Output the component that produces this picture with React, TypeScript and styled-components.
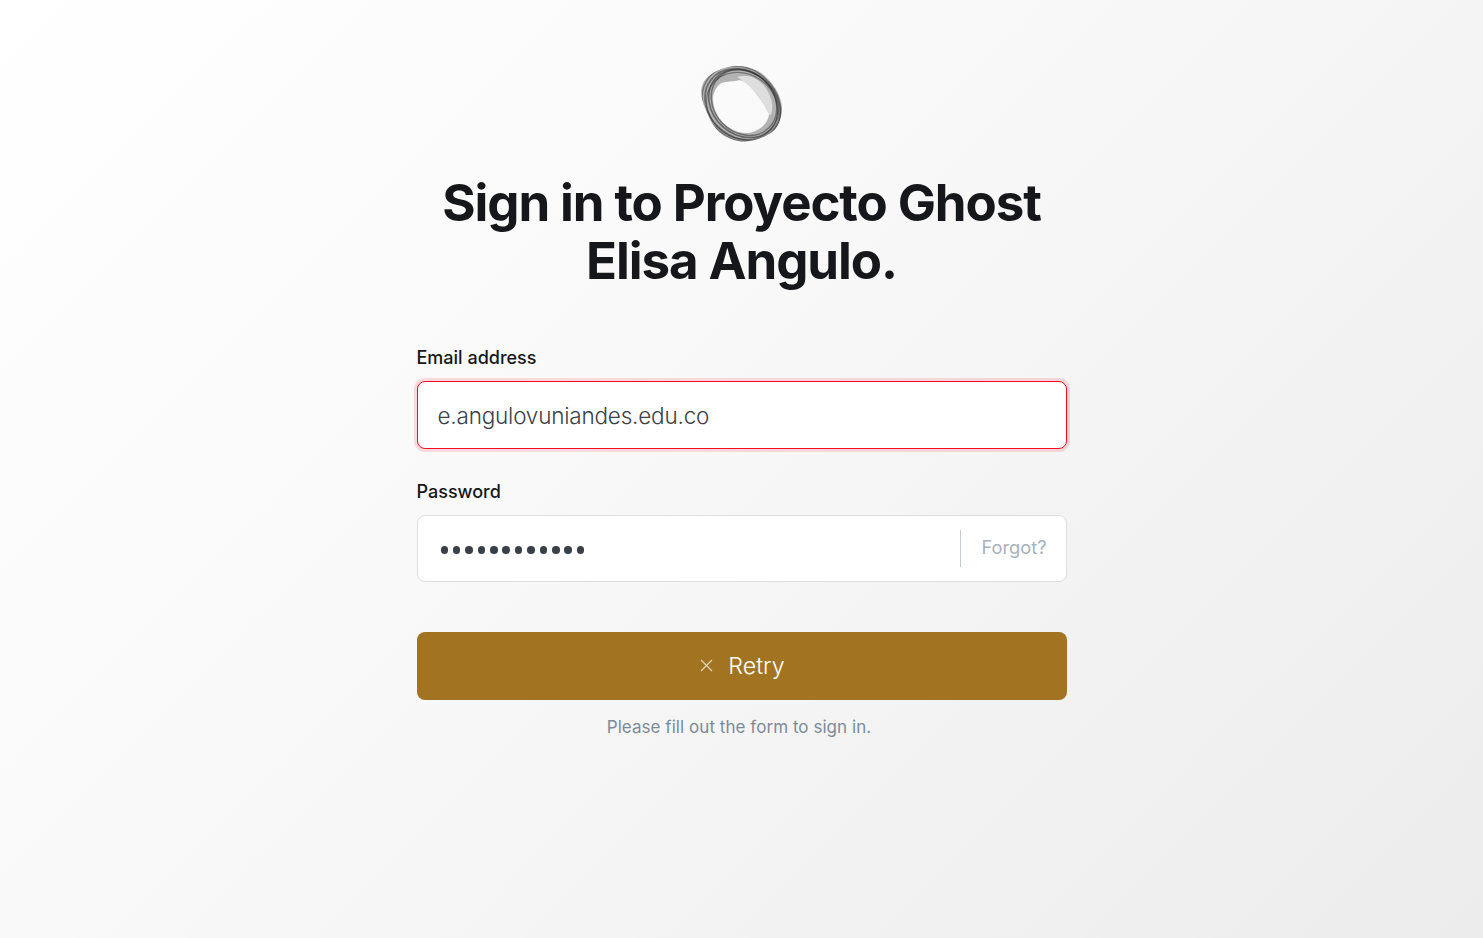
import React from 'react';
import styled, { createGlobalStyle } from 'styled-components';

const GlobalStyle = createGlobalStyle`
  html, body {
    margin: 0;
    padding: 0;
    height: 100%;
  }
  body {
    font-family: Inter, "Liberation Sans", sans-serif;
    overflow: hidden;
  }
`;

const Page = styled.div`
  height: 938px;
  background: linear-gradient(135deg, #ffffff 0%, #f9f9f9 40%, #ececec 100%);
  display: flex;
  flex-direction: column;
  align-items: center;
  padding-top: 65px;
  box-sizing: border-box;
`;

const Logo = styled.svg`
  width: 84px;
  height: 80px;
  display: block;
`;

const Title = styled.h1`
  margin: 29px 0 0;
  width: 650px;
  text-align: center;
  font-size: 51px;
  line-height: 58px;
  font-weight: 700;
  letter-spacing: -1.08px;
  color: #15171a;
`;

const Form = styled.form`
  width: 650px;
  margin-top: 56px;
  display: flex;
  flex-direction: column;
`;

const Field = styled.div`
  display: flex;
  flex-direction: column;
  margin-bottom: 31px;

  &:last-of-type {
    margin-bottom: 24px;
  }
`;

const Label = styled.label`
  font-size: 18px;
  line-height: 24px;
  font-weight: 500;
  color: #15171a;
  margin-bottom: 11px;
`;

const InputBox = styled.div<{ $error?: boolean }>`
  height: ${p => (p.$error ? 68 : 67)}px;
  box-sizing: border-box;
  background: #fff;
  border-radius: 8px;
  border: 1px solid ${p => (p.$error ? '#f50b23' : '#dddee0')};
  box-shadow: ${p => (p.$error ? '0 0 0 3px rgba(240, 37, 55, 0.15)' : 'none')};
  display: flex;
  align-items: center;
  padding-left: 20px;
`;

const InputText = styled.span`
  flex: 1;
  font-size: 22.5px;
  font-weight: 300;
  letter-spacing: -0.2px;
  color: #394047;
`;

const Dots = styled.span`
  flex: 1;
  display: flex;
  gap: 4.9px;
  padding: 3px 0 0 3px;
`;

const Dot = styled.i`
  width: 7.5px;
  height: 7.5px;
  border-radius: 50%;
  background: #394047;
`;

const Forgot = styled.a`
  align-self: center;
  height: 37px;
  line-height: 35px;
  padding: 0 19px 0 20px;
  border-left: 1px solid #c6ccd2;
  font-size: 18.3px;
  color: #a8b1bc;
`;

const SubmitButton = styled.button`
  margin-top: 26px;
  height: 68px;
  padding: 0 0 1px 2px;
  border: none;
  border-radius: 8px;
  background: #a27422;
  color: #fff;
  font-family: inherit;
  font-size: 23.2px;
  font-weight: 300;
  display: flex;
  align-items: center;
  justify-content: center;
  gap: 15px;
`;

const Hint = styled.p`
  margin: 15px 0 0;
  padding-right: 5px;
  text-align: center;
  font-size: 17px;
  line-height: 24px;
  letter-spacing: 0.05px;
  color: #7c8b9a;
`;

const dots = Array.from({ length: 12 }, (_, i) => i);

// closed catmull-rom curve through the points
const smooth = (pts: number[][]) => {
  const n = pts.length;
  let d = `M${pts[0][0]} ${pts[0][1]}`;
  for (let i = 0; i < n; i++) {
    const [p0, p1, p2, p3] = [pts[(i + n - 1) % n], pts[i], pts[(i + 1) % n], pts[(i + 2) % n]];
    const c1 = [p1[0] + (p2[0] - p0[0]) / 6, p1[1] + (p2[1] - p0[1]) / 6];
    const c2 = [p2[0] - (p3[0] - p1[0]) / 6, p2[1] - (p3[1] - p1[1]) / 6];
    d += `C${c1[0].toFixed(1)} ${c1[1].toFixed(1)} ${c2[0].toFixed(1)} ${c2[1].toFixed(1)} ${p2[0]} ${p2[1]}`;
  }
  return d + 'Z';
};

const outer = [[35, 1], [58, 6], [75, 23], [82, 43], [76, 63], [58, 74], [38, 76], [18, 66], [5, 43], [1.5, 23], [11.5, 9]];
const hole = [[20, 19], [35, 16], [43, 16], [51.5, 23], [61.5, 36], [69, 48], [63, 61], [48, 68], [31.5, 64], [18, 51], [13, 33]];
const paleBand = [[38, 12], [52, 12], [65, 22], [72, 38], [70, 50], [61.5, 36], [51.5, 23], [43, 16]];

const loops = [
  { rx: 42, ry: 35, rot: 40, cx: 41.5, cy: 39, w: 1.4, o: 0.45 },
  { rx: 40, ry: 33, rot: 38, cx: 42.5, cy: 39.5, w: 1.8, o: 0.5 },
  { rx: 37.5, ry: 31, rot: 42, cx: 43.5, cy: 38.5, w: 1.6, o: 0.55 },
  { rx: 35.5, ry: 30, rot: 46, cx: 44, cy: 37.5, w: 1.4, o: 0.5 },
  { rx: 37, ry: 32, rot: 34, cx: 42, cy: 41, w: 1.3, o: 0.45 },
];

function App() {
  return (
    <Page>
      <GlobalStyle />
      <Logo viewBox="0 0 84 80">
        <defs>
          <filter id="soft" x="-10%" y="-10%" width="120%" height="120%">
            <feGaussianBlur stdDeviation="0.5" />
          </filter>
          <clipPath id="ring">
            <path clipRule="evenodd" d={smooth(outer) + smooth(hole)} />
          </clipPath>
        </defs>
        <g filter="url(#soft)">
          <path fillRule="evenodd" fill="#a0a0a0" fillOpacity="0.8" d={smooth(outer) + smooth(hole)} />
          <path fill="#dedede" d={smooth(paleBand)} />
          <g clipPath="url(#ring)" fill="none" stroke="#2a2a2a">
            {loops.map(l => (
              <ellipse
                key={l.rx}
                cx={l.cx}
                cy={l.cy}
                rx={l.rx}
                ry={l.ry}
                transform={`rotate(${l.rot} ${l.cx} ${l.cy})`}
                strokeWidth={l.w}
                strokeOpacity={l.o}
              />
            ))}
          </g>
        </g>
      </Logo>
      <Title>
        Sign in to Proyecto Ghost
        <br />
        Elisa Angulo.
      </Title>
      <Form>
        <Field>
          <Label>Email address</Label>
          <InputBox $error>
            <InputText>e.angulovuniandes.edu.co</InputText>
          </InputBox>
        </Field>
        <Field>
          <Label>Password</Label>
          <InputBox>
            <Dots>
              {dots.map(i => (
                <Dot key={i} />
              ))}
            </Dots>
            <Forgot>Forgot?</Forgot>
          </InputBox>
        </Field>
        <SubmitButton type="button">
          <svg width="13" height="13" viewBox="0 0 13 13" fill="none" stroke="#e6d8bd" strokeWidth="1.1">
            <path d="M1 1l11 11M12 1L1 12" />
          </svg>
          Retry
        </SubmitButton>
        <Hint>Please fill out the form to sign in.</Hint>
      </Form>
    </Page>
  );
}

export default App;
